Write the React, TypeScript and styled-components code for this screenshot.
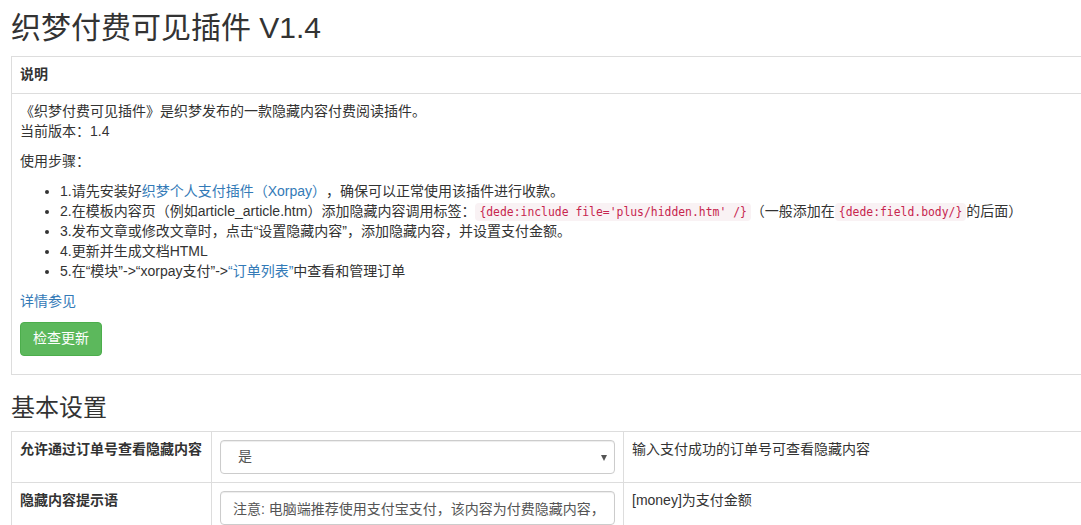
import React from "react";
import styled, { createGlobalStyle } from "styled-components";

const GlobalStyle = createGlobalStyle`
  html, body {
    margin: 0;
    padding: 0;
    overflow: hidden;
    background: #fff;
  }
  body {
    font-family: "Liberation Sans", "Noto Sans CJK SC", sans-serif;
    font-size: 14px;
    line-height: 1.42857;
    color: #333;
    text-spacing-trim: space-all;
  }
`;

const Page = styled.div`
  width: 1130px;
  padding-left: 11px;
`;

const Title = styled.h2`
  margin: 11px 0 12px;
  font-size: 30px;
  font-weight: 400;
  line-height: 1.1;
`;

const SubTitle = styled.h3`
  margin: 20px 0 10px;
  font-size: 24px;
  font-weight: 400;
  line-height: 1.1;
`;

const Table = styled.table`
  width: 100%;
  margin-bottom: 20px;
  border-collapse: collapse;
  border-spacing: 0;
  table-layout: fixed;
`;

// width is the content width; padding and border come on top of it
const HeadCell = styled.th<{ $width?: number }>`
  width: ${(p) => (p.$width ? `${p.$width}px` : "auto")};
  padding: 8px;
  border: 1px solid #ddd;
  text-align: left;
  vertical-align: top;
  font-weight: bold;
`;

const Cell = styled.td<{ $width?: number }>`
  width: ${(p) => (p.$width ? `${p.$width}px` : "auto")};
  padding: 8px;
  border: 1px solid #ddd;
  vertical-align: top;
`;

const Para = styled.p`
  margin: 0 0 10px;
`;

const Steps = styled.ul`
  margin: 0 0 10px;
  padding-left: 40px;
`;

const Link = styled.a`
  color: #337ab7;
  text-decoration: none;
`;

const Code = styled.code`
  padding: 2px 4px;
  font-family: "DejaVu Sans Mono", "Liberation Mono", monospace;
  font-size: 11.4px;
  color: #c7254e;
  background: #f9f2f4;
  border-radius: 4px;
`;

const Button = styled.button`
  display: inline-block;
  padding: 6px 12px;
  font-family: inherit;
  font-size: 14px;
  line-height: 1.42857;
  color: #fff;
  background: #5cb85c;
  border: 1px solid #4cae4c;
  border-radius: 4px;
  cursor: pointer;
`;

const SelectWrap = styled.div`
  position: relative;
  &::after {
    content: "";
    position: absolute;
    right: 8px;
    top: 15px;
    border-left: 3.5px solid transparent;
    border-right: 3.5px solid transparent;
    border-top: 6px solid #555;
    pointer-events: none;
  }
`;

const fieldBase = `
  display: block;
  box-sizing: border-box;
  width: 100%;
  height: 34px;
  padding: 6px 12px;
  font-family: "Liberation Sans", "Noto Sans CJK SC", sans-serif;
  font-size: 14px;
  line-height: 1.42857;
  color: #555;
  background: #fff;
  border: 1px solid #ccc;
  border-radius: 4px;
  box-shadow: inset 0 1px 1px rgba(0, 0, 0, 0.075);
  outline: none;
`;

const Select = styled.select`
  ${fieldBase}
  appearance: none;
  padding-left: 17px;
`;

const TextInput = styled.input`
  ${fieldBase}
`;

export default function App() {
  return (
    <Page>
      <GlobalStyle />
      <Title>织梦付费可见插件 V1.4</Title>

      <Table>
        <thead>
          <tr>
            <HeadCell>说明</HeadCell>
          </tr>
        </thead>
        <tbody>
          <tr>
            <Cell>
              <Para>
                《织梦付费可见插件》是织梦发布的一款隐藏内容付费阅读插件。
                <br />
                当前版本：1.4
              </Para>
              <Para>使用步骤：</Para>
              <Steps>
                <li>
                  1.请先安装好<Link href="#">织梦个人支付插件（Xorpay）</Link>，确保可以正常使用该插件进行收款。
                </li>
                <li>
                  2.在模板内容页（例如article_article.htm）添加隐藏内容调用标签：
                  <Code>{"{dede:include file='plus/hidden.htm' /}"}</Code>（一般添加在
                  <Code>{"{dede:field.body/}"}</Code>的后面）
                </li>
                <li>3.发布文章或修改文章时，点击“设置隐藏内容”，添加隐藏内容，并设置支付金额。</li>
                <li>4.更新并生成文档HTML</li>
                <li>
                  5.在“模块”-&gt;“xorpay支付”-&gt;<Link href="#">“订单列表”</Link>中查看和管理订单
                </li>
              </Steps>
              <Para>
                <Link href="#">详情参见</Link>
              </Para>
              <Para>
                <Button type="button">检查更新</Button>
              </Para>
            </Cell>
          </tr>
        </tbody>
      </Table>

      <SubTitle>基本设置</SubTitle>
      <Table>
        <tbody>
          <tr>
            <HeadCell $width={183}>允许通过订单号查看隐藏内容</HeadCell>
            <Cell $width={395}>
              <SelectWrap>
                <Select defaultValue="1">
                  <option value="1">是</option>
                  <option value="0">否</option>
                </Select>
              </SelectWrap>
            </Cell>
            <Cell>输入支付成功的订单号可查看隐藏内容</Cell>
          </tr>
          <tr>
            <HeadCell>隐藏内容提示语</HeadCell>
            <Cell>
              <TextInput
                type="text"
                defaultValue="注意: 电脑端推荐使用支付宝支付，该内容为付费隐藏内容，您需要付费后才能查看"
              />
            </Cell>
            <Cell>[money]为支付金额</Cell>
          </tr>
        </tbody>
      </Table>
    </Page>
  );
}
